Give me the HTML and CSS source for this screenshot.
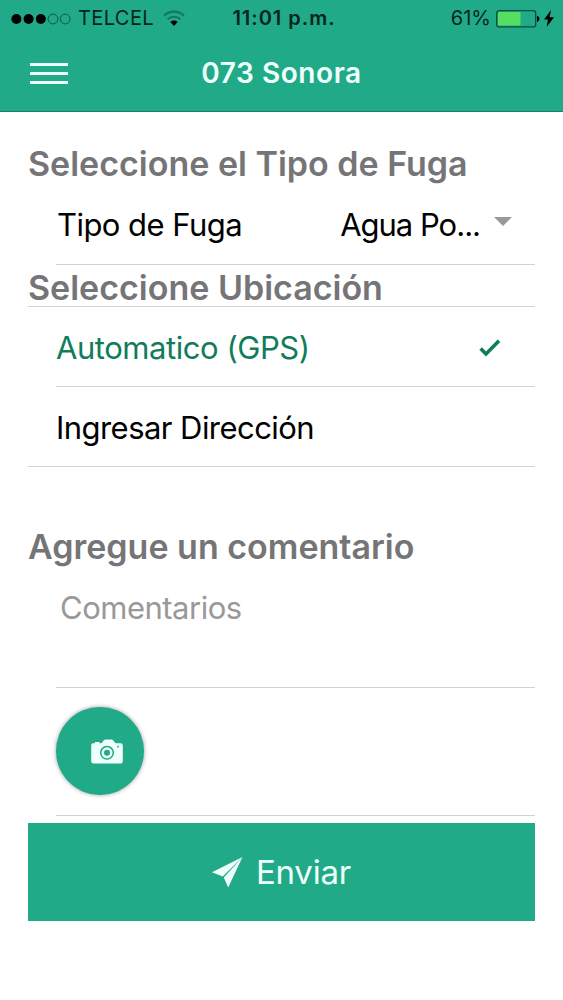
FILE: index.html
```html
<!DOCTYPE html>
<html lang="es">
<head>
    <meta charset="UTF-8">
    <meta name="viewport" content="width=device-width, initial-scale=1.0">
    <title>073 Sonora</title>
    <link rel="stylesheet" href="styles.css">
</head>
<body>
    <header class="header">
        <div class="status-bar">
            <div class="status-left">
                <svg class="signal" width="60" height="12" viewBox="0 0 60 12">
                    <circle cx="5.4" cy="6" r="5"/>
                    <circle cx="17.6" cy="6" r="5"/>
                    <circle cx="29.8" cy="6" r="5"/>
                    <circle class="empty" cx="42" cy="6" r="4.9"/>
                    <circle class="empty" cx="54.2" cy="6" r="4.9"/>
                </svg>
                <span class="carrier">TELCEL</span>
                <svg class="wifi" width="22" height="17" viewBox="0 0 22 17">
                    <path class="weak" d="M1 5.6a14.5 14.5 0 0 1 20 0"/>
                    <path class="weak" d="M4.6 9.3a9.3 9.3 0 0 1 12.8 0"/>
                    <path d="M7.4 12a5.2 5.2 0 0 1 7.2 0L11 16z"/>
                </svg>
            </div>
            <span class="clock">11:01 p.m.</span>
            <div class="status-right">
                <span class="percent">61%</span>
                <svg class="battery" width="44" height="18" viewBox="0 0 44 18">
                    <rect class="case" x="0.7" y="0.7" width="39" height="16.2" rx="2.5"/>
                    <rect class="level" x="2" y="2" width="22.5" height="13.6" rx="1"/>
                    <path d="M41 5.7c3.2.6 3.2 5.6 0 6.2z"/>
                </svg>
                <svg class="bolt" width="10" height="17" viewBox="0 0 10 17">
                    <path d="M7 0L0 9.4h4L2.6 17 10 7.2H5.6z"/>
                </svg>
            </div>
        </div>
        <div class="nav-bar">
            <button class="menu-button" aria-label="Menu">
                <span></span>
                <span></span>
                <span></span>
            </button>
            <h1 class="title">073 Sonora</h1>
        </div>
    </header>

    <form class="report-form">
        <h2 class="type-title">Seleccione el Tipo de Fuga</h2>
        <div class="row select-row">
            <span class="type-label">Tipo de Fuga</span>
            <span class="select-value">Agua Po...</span>
            <svg class="arrow" width="18" height="9" viewBox="0 0 18 9">
                <path d="M0 0h18L9 9z"/>
            </svg>
        </div>

        <h2 class="location-title">Seleccione Ubicación</h2>
        <div class="location-list">
            <div class="row option selected">
                <span class="gps-label">Automatico (GPS)</span>
                <svg class="check" width="22" height="18" viewBox="0 0 22 18">
                    <path d="M1.6 9.6L7 15 20 1.8"/>
                </svg>
            </div>
            <div class="row option">
                <span class="address-label">Ingresar Dirección</span>
            </div>
        </div>

        <h2 class="comment-title">Agregue un comentario</h2>
        <div class="comment-row">
            <textarea class="comment" placeholder="Comentarios"></textarea>
        </div>

        <div class="camera-row">
            <button type="button" class="camera-button" aria-label="Foto">
                <svg width="32" height="25" viewBox="0 0 32 25">
                    <path class="body" d="M2 4.2h2V3h4.5v1.2h1.6C11.7 4 12.5.6 14.5.6h6C22.5.6 23.3 4 25 4.2h4.5A2.3 2.3 0 0 1 31.8 6.5v15.7a2.3 2.3 0 0 1-2.3 2.3h-27A2.3 2.3 0 0 1 .2 22.2V6.2A2 2 0 0 1 2 4.2z"/>
                    <circle class="ring" cx="16" cy="13.8" r="6.3"/>
                    <circle class="lens" cx="16" cy="13.8" r="3"/>
                    <circle class="lens" cx="27" cy="7.7" r="0.9"/>
                </svg>
            </button>
        </div>

        <button type="button" class="send-button">
            <svg width="31" height="31" viewBox="0 0 31 31">
                <path d="M30.5 0L0 15.2l10.7 4.2z"/>
                <path d="M30.5 0L11.8 20.5 16.2 30.5z"/>
            </svg>
            <span>Enviar</span>
        </button>
    </form>
</body>
</html>
```
FILE: styles.css
```css
/* Body styling */
body {
    font-family: Inter, "Liberation Sans", sans-serif;
    background-color: #fff;
    color: #000;
    margin: 0;
    padding: 0;
}

* {
    box-sizing: border-box;
}

h1, h2 {
    margin: 0;
}

button {
    border: none;
    padding: 0;
    cursor: pointer;
}

svg {
    display: block;
    flex-shrink: 0;
}

/* Header */
.header {
    height: 112px;
    background-color: #21aa87;
    border-bottom: 1px solid #188267;
}

.status-bar {
    display: grid;
    grid-template-columns: 1fr auto 1fr;
    align-items: center;
    height: 36px;
    padding: 0 9px 0 11px;
    font-size: 20px;
    line-height: 37px;
    color: #06251d;
}

.status-left, .status-right {
    display: flex;
    align-items: center;
}

.status-right {
    justify-content: flex-end;
}

.signal {
    fill: #000;
}

.signal .empty {
    fill: none;
    stroke: #0d5846;
    stroke-width: 1;
}

.carrier {
    margin-left: 7px;
    letter-spacing: 0.4px;
}

.wifi {
    margin-left: 9px;
}

.wifi .weak {
    fill: none;
    stroke: #14775f;
    stroke-width: 2.2;
}

.clock {
    font-weight: 600;
    letter-spacing: 1px;
    padding-left: 3px;
}

.battery {
    margin-left: 5px;
}

.battery .case {
    fill: none;
    stroke: #0b4d3d;
    stroke-width: 1.3;
}

.battery .level {
    fill: #56de62;
}

.bolt {
    margin-left: 4px;
}

.nav-bar {
    display: grid;
    grid-template-columns: 38px 1fr 38px;
    align-items: center;
    height: 74px;
    padding: 0 30px;
}

.menu-button {
    display: flex;
    flex-direction: column;
    gap: 6px;
    background: none;
}

.menu-button span {
    width: 38px;
    height: 3px;
    background-color: #effffb;
}

.title {
    font-size: 28px;
    font-weight: 600;
    letter-spacing: 0.55px;
    text-align: center;
    color: #effffb;
}

/* Form */
.report-form {
    padding: 29px 28px 0;
}

h2 {
    font-size: 34px;
    font-weight: 600;
    line-height: 46px;
    color: #757577;
    white-space: nowrap;
}

.row {
    display: flex;
    align-items: center;
    height: 80px;
    margin-left: 28px;
    padding: 1px 24px 0 0;
    border-bottom: 1px solid #d3d3d5;
    font-size: 31px;
    letter-spacing: -0.45px;
    white-space: nowrap;
}

.select-row {
    height: 78px;
    padding: 0 23px 2px 1px;
}

.type-label {
    letter-spacing: -0.55px;
}

.select-value {
    margin-left: auto;
    letter-spacing: -1px;
}

.arrow {
    margin: -6px 0 0 14px;
    fill: #999;
}

.location-title {
    height: 41px;
    line-height: 45px;
}

.location-list {
    border-top: 1px solid #d3d3d5;
    border-bottom: 1px solid #d3d3d5;
}

.option:last-child {
    height: 79px;
    border-bottom: none;
}

.address-label {
    letter-spacing: -0.55px;
}

.selected {
    color: #107c5b;
}

.check {
    margin: 1px 10px 0 auto;
    fill: none;
    stroke: #107c5b;
    stroke-width: 3.6;
}

.comment-title {
    margin-top: 57px;
}

.comment-row {
    height: 118px;
    margin-left: 28px;
    padding: 19px 4px 0;
    border-bottom: 1px solid #d3d3d5;
}

.comment {
    display: block;
    width: 100%;
    height: 80px;
    padding: 0;
    border: none;
    outline: none;
    resize: none;
    background: none;
    font-family: inherit;
    font-size: 31px;
    line-height: 38px;
    letter-spacing: -0.5px;
}

.comment::placeholder {
    color: #999;
}

/* Camera */
.camera-row {
    height: 128px;
    margin-left: 28px;
    padding-top: 19px;
    border-bottom: 1px solid #d3d3d5;
}

.camera-button {
    display: flex;
    align-items: center;
    justify-content: center;
    width: 88px;
    height: 88px;
    padding-left: 14px;
    border-radius: 50%;
    background-color: #21aa87;
    box-shadow: 0 0 4px rgba(0, 0, 0, 0.4);
}

.camera-button .body {
    fill: #effffb;
}

.camera-button .ring {
    fill: none;
    stroke: #21aa87;
    stroke-width: 1.5;
}

.camera-button .lens {
    fill: #21aa87;
}

/* Send button */
.send-button {
    display: flex;
    align-items: center;
    justify-content: center;
    gap: 13px;
    width: 100%;
    height: 98px;
    margin-top: 7px;
    background-color: #21aa87;
    color: #effffb;
    font-family: inherit;
    font-size: 33px;
    font-weight: 400;
    letter-spacing: -0.2px;
}

.send-button svg {
    fill: #effffb;
}
```
